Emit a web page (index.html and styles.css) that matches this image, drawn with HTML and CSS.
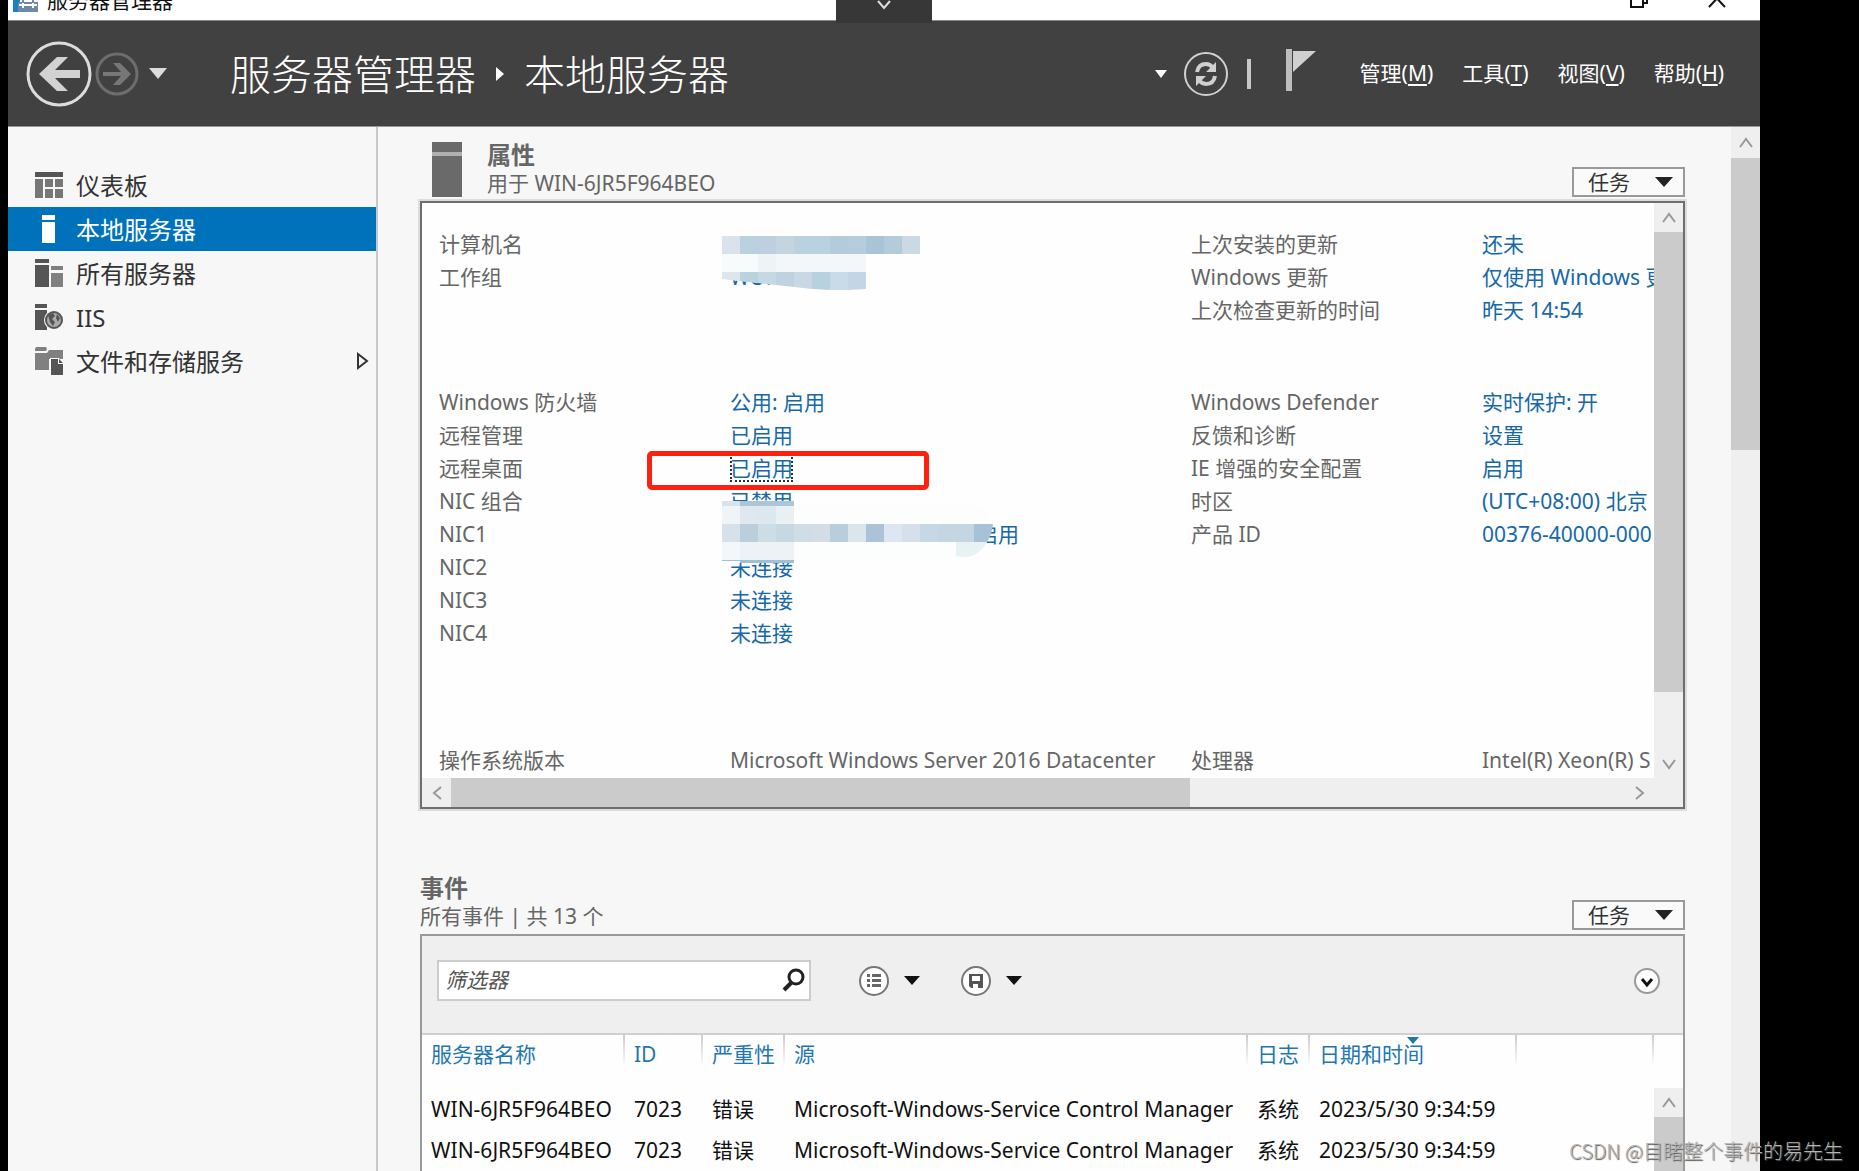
FILE: index.html
```html
<!DOCTYPE html>
<html lang="zh-CN">
<head>
<meta charset="utf-8">
<title>服务器管理器</title>
<link rel="stylesheet" href="styles.css">
</head>
<body>
<div class="window">
  <div class="titlebar">
    <svg class="app-icon" width="26" height="22" viewBox="0 0 26 22"><path d="M0 0h7v22H0z" fill="#1c7fc0"/><path d="M7 2h3v8H7z" fill="#7fc4ec"/><path d="M5 12h20v10H5z" fill="#6d8ba4"/><path d="M10 12V6h10v6" fill="none" stroke="#6d8ba4" stroke-width="2"/><path d="M6 15h18M10 13v5M20 13v5" stroke="#fff" stroke-width="2"/></svg>
    <span class="app-name">服务器管理器</span>
    <div class="window-buttons">
      <button type="button" aria-label="最小化"><svg width="18" height="20"><path d="M0 11.500h14" stroke="#ddd"/></svg></button>
      <button type="button" aria-label="还原"><svg width="18" height="20"><path d="M1 6h12v13H1zM5 6V2h12v13h-4" fill="none" stroke="#111" stroke-width="2"/></svg></button>
      <button type="button" aria-label="关闭"><svg width="18" height="20"><path d="M1 2l16 17M17 2L1 19" stroke="#111" stroke-width="2"/></svg></button>
    </div>
  </div>
  <button type="button" class="session-tab" aria-label="展开连接栏"><svg width="16" height="10"><path d="M2 1l6 7 6-7" fill="none" stroke="#ddd" stroke-width="2"/></svg></button>

  <header class="header">
    <button type="button" class="nav-back" aria-label="后退"><svg width="64" height="66" viewBox="0 0 64 66"><circle cx="32" cy="33" r="31" fill="none" stroke="#dcdcdc" stroke-width="3"/><path d="M12 33L30 16h11L28 29h25v8H28l13 13H30z" fill="#d2d2d2"/></svg></button>
    <button type="button" class="nav-forward" aria-label="前进"><svg width="44" height="46" viewBox="0 0 44 46"><circle cx="22" cy="23" r="20" fill="none" stroke="#6d6d6d" stroke-width="3"/><path d="M36 23L25 12h-7l8 9H8v4h18l-8 9h7z" fill="#777"/></svg></button>
    <button type="button" class="nav-menu" aria-label="历史"><svg width="18" height="12"><path d="M0 0h18l-9 11z" fill="#dcdcdc"/></svg></button>
    <h1 class="crumbs"><span>服务器管理器</span><svg width="8" height="14"><path d="M0 0l8 7-8 7z" fill="#fff"/></svg><span>本地服务器</span></h1>
    <div class="header-tools">
      <svg class="tool-caret" width="12" height="8"><path d="M0 0h12l-6 8z" fill="#fff"/></svg>
      <button type="button" aria-label="刷新"><svg width="46" height="46" viewBox="0 0 46 46"><circle cx="23" cy="23" r="21" fill="none" stroke="#d0d0d0" stroke-width="2"/><g fill="none" stroke="#d0d0d0" stroke-width="4"><path d="M14 21c1-6 5-8 9-8 3 0 5 1 7 4"/><path d="M32 25c-1 6-5 8-9 8-3 0-5-1-7-4"/></g><path d="M33 11v10H23zM13 35V25h10z" fill="#d0d0d0"/></svg></button>
      <svg class="tool-bar" width="4" height="32"><path d="M2 1v30" stroke="#c8c8c8" stroke-width="4"/></svg>
      <button type="button" class="flag" aria-label="通知"><svg width="30" height="42"><path d="M0 0h6v42H0z" fill="#bdbdbd"/><path d="M7 2h23L7 23z" fill="#d0d0d0"/></svg></button>
      <nav class="menus">
        <button type="button">管理(<u>M</u>)</button>
        <button type="button">工具(<u>T</u>)</button>
        <button type="button">视图(<u>V</u>)</button>
        <button type="button">帮助(<u>H</u>)</button>
      </nav>
    </div>
  </header>

  <div class="body">
    <nav class="sidebar">
      <a href="#dashboard"><svg width="28" height="28"><path d="M0 1h28v5H0z" fill="#555"/><path d="M0 8h8v19H0zM10 8h8v8h-8zM20 8h8v8h-8zM10 18h8v9h-8zM20 18h8v9h-8z" fill="#777"/></svg><span>仪表板</span></a>
      <a href="#local" class="current" aria-current="page"><svg width="28" height="28"><path d="M7 0h13v5H7zM7 7h13v21H7z" fill="#fff"/></svg><span>本地服务器</span></a>
      <a href="#all"><svg width="28" height="28"><path d="M0 0h14v4H0zM0 6h14v22H0z" fill="#555"/><path d="M16 7h12v4H16zM16 14h12v14H16z" fill="#808080"/></svg><span>所有服务器</span></a>
      <a href="#iis"><svg width="28" height="28"><path d="M0 1h12v4H0zM0 7h12v20H0z" fill="#555"/><circle cx="19" cy="17" r="10" fill="#f7f7f7"/><circle cx="19" cy="17" r="8" fill="#aaa" stroke="#555" stroke-width="2"/><path d="M13 12l5-2 2 3-3 3 3 3-2 4-3-4zM22 11l3 4-2 4-2-4z" fill="#555"/></svg><span>IIS</span></a>
      <a href="#storage"><svg width="28" height="28"><path d="M1 0h10l1 2-1 2H0V2zM0 6h12l2-3h14v9H14v11H0z" fill="#808080"/><path d="M15 11h9l4 5v12H15z" fill="#f7f7f7"/><path d="M16 12h7v5h5v11H16zM24 12l4 4h-4z" fill="#555"/></svg><span>文件和存储服务</span><svg class="expander" width="12" height="16"><path d="M1 1l9 7-9 7z" fill="none" stroke="#333" stroke-width="2"/></svg></a>
    </nav>

    <main class="content">
      <section class="panel-group">
        <div class="panel-head">
          <svg class="server-icon" width="30" height="55"><path d="M0 0h30v10H0zM0 14h30v41H0z" fill="#6a6a6a"/><path d="M0 10h30v4H0z" fill="#b0b0b0"/></svg>
          <div><h2>属性</h2><p>用于 WIN-6JR5F964BEO</p></div>
          <button type="button" class="tasks">任务<svg width="18" height="10"><path d="M0 0h18l-9 10z" fill="#222"/></svg></button>
        </div>
        <div class="panel properties">
          <div class="prop-area">
            <div class="prop-group first">
              <dl><dt>计算机名</dt><dd></dd><dt>工作组</dt><dd><a href="#workgroup">WORKGROUP</a></dd></dl>
              <dl><dt>上次安装的更新</dt><dd><a href="#u1">还未</a></dd><dt>Windows 更新</dt><dd><a href="#u2">仅使用 Windows 更</a></dd><dt>上次检查更新的时间</dt><dd><a href="#u3">昨天 14:54</a></dd></dl>
            </div>
            <div class="prop-group second">
              <dl><dt>Windows 防火墙</dt><dd><a href="#fw">公用: 启用</a></dd><dt>远程管理</dt><dd><a href="#rm">已启用</a></dd><dt>远程桌面</dt><dd><a href="#rd" class="focused">已启用</a></dd><dt>NIC 组合</dt><dd><a href="#team">已禁用</a></dd><dt>NIC1</dt><dd><a href="#nic1" class="masked">启用</a></dd><dt>NIC2</dt><dd><a href="#nic2">未连接</a></dd><dt>NIC3</dt><dd><a href="#nic3">未连接</a></dd><dt>NIC4</dt><dd><a href="#nic4">未连接</a></dd></dl>
              <dl><dt>Windows Defender</dt><dd><a href="#wd">实时保护: 开</a></dd><dt>反馈和诊断</dt><dd><a href="#fb">设置</a></dd><dt>IE 增强的安全配置</dt><dd><a href="#ie">启用</a></dd><dt>时区</dt><dd><a href="#tz">(UTC+08:00) 北京</a></dd><dt>产品 ID</dt><dd><a href="#pid">00376-40000-000</a></dd></dl>
            </div>
            <div class="prop-group">
              <dl><dt>操作系统版本</dt><dd>Microsoft Windows Server 2016 Datacenter</dd></dl>
              <dl><dt>处理器</dt><dd>Intel(R) Xeon(R) S</dd></dl>
            </div>
            <svg class="mosaic mosaic-name" width="200" height="56" aria-hidden="true">
              <path d="M0 18h200v36H100L0 43z" fill="#fefefe"/>
              <path d="M0 0h18v18H0z" fill="#dae3eb"/><path d="M18 0h18v18H18z" fill="#bad1df"/><path d="M36 0h18v18H36z" fill="#becfdf"/><path d="M54 0h18v18H54z" fill="#c5d5e0"/><path d="M72 0h36v18H72z" fill="#bad1df"/><path d="M108 0h18v18h-18z" fill="#b3cbdb"/><path d="M126 0h18v18h-18z" fill="#b7cddd"/><path d="M144 0h18v18h-18z" fill="#a9c4d7"/><path d="M162 0h18v18h-18z" fill="#b3cbdb"/><path d="M180 0h18v18h-18z" fill="#cad9e3"/>
              <path d="M0 18h36v18H0z" fill="#f8fbfb"/><path d="M36 18h18v18H36z" fill="#eef3f6"/><path d="M54 18h90v18H54z" fill="#f3f7f9"/>
              <path d="M0 36h18v9L0 43z" fill="#dce6ec"/><path d="M18 36h18v11l-18-2z" fill="#b9d2df"/><path d="M36 36h18v13l-18-2z" fill="#c5d9e4"/><path d="M54 36h18v15l-18-2z" fill="#bfd2e2"/><path d="M72 36h18v17l-18-2z" fill="#c8d9e5"/><path d="M90 36h18v18l-18-1z" fill="#b7d1e0"/><path d="M108 36h18v18h-18z" fill="#c9dae8"/><path d="M126 36h18v17l-18 1z" fill="#c3d5e7"/>
            </svg>
            <svg class="mosaic mosaic-nic" width="272" height="62" aria-hidden="true">
              <path d="M0 0h72v5h180q18 4 18 18l-6 20q-10 14-26 14L72 60v2H0z" fill="#fcfdfd"/>
              <path d="M0 0h18v5H0z" fill="#d9e3ea"/><path d="M18 0h54v5H18z" fill="#adc6d6"/>
              <path d="M0 5h18v18H0z" fill="#eff4f8"/><path d="M18 5h18v18H18z" fill="#dfe8ef"/><path d="M36 5h18v18H36z" fill="#dbe9ef"/><path d="M54 5h18v18H54z" fill="#e8f0f3"/>
              <path d="M0 41h18v18H0z" fill="#f3f7f9"/><path d="M18 41h54v18H18z" fill="#edf2f7"/><path d="M0 59h18v1H0zM18 59h54v3H18z" fill="#9fc0d3"/>
              <path d="M0 23h18v18H0z" fill="#d6e1ea"/><path d="M18 23h18v18H18z" fill="#bacfdb"/><path d="M36 23h18v18H36z" fill="#ccdde6"/><path d="M54 23h18v18H54z" fill="#c6d9e2"/><path d="M72 23h18v18H72z" fill="#cfdee6"/><path d="M90 23h18v18H90z" fill="#d4dde5"/><path d="M108 23h18v18h-18z" fill="#b9cedb"/><path d="M126 23h18v18h-18z" fill="#dae6eb"/><path d="M144 23h18v18h-18z" fill="#abc2d9"/><path d="M162 23h18v18h-18z" fill="#dee7f1"/><path d="M180 23h18v18h-18z" fill="#d8dfec"/><path d="M198 23h18v18h-18z" fill="#c5d8e5"/><path d="M216 23h36v18h-36z" fill="#c3d6e1"/><path d="M252 23h19q-1 10-6 18h-13z" fill="#a7c2d7"/>
              <path d="M234 41h31q-8 14-22 15l-9-1z" fill="#e8f1f3"/>
            </svg>
            <div class="callout"></div>
          </div>
          <div class="scroll-v"><button type="button" aria-label="向上"><svg width="14" height="10"><path d="M1 9l6-8 6 8" fill="none" stroke="#999" stroke-width="2"/></svg></button><div class="thumb"></div><button type="button" class="end" aria-label="向下"><svg width="14" height="10"><path d="M1 1l6 8 6-8" fill="none" stroke="#999" stroke-width="2"/></svg></button></div>
          <div class="scroll-h"><button type="button" aria-label="向左"><svg width="10" height="14"><path d="M9 1L2 7l7 6" fill="none" stroke="#999" stroke-width="2"/></svg></button><div class="thumb"></div><button type="button" class="end" aria-label="向右"><svg width="10" height="14"><path d="M1 1l7 6-7 6" fill="none" stroke="#999" stroke-width="2"/></svg></button></div>
          <div class="scroll-corner"></div>
        </div>
      </section>

      <section class="panel-group grow">
        <div class="panel-head">
          <div><h2>事件</h2><p>所有事件 | 共 13 个</p></div>
          <button type="button" class="tasks">任务<svg width="18" height="10"><path d="M0 0h18l-9 10z" fill="#222"/></svg></button>
        </div>
        <div class="panel events">
          <div class="toolbar">
            <label class="filter"><input type="text" placeholder="筛选器" aria-label="筛选器"><svg width="22" height="26" viewBox="0 0 22 26"><circle cx="13" cy="9" r="7" fill="none" stroke="#222" stroke-width="3"/><path d="M8 15l-7 7" stroke="#222" stroke-width="4"/></svg></label>
            <button type="button" class="round" aria-label="分组"><svg width="32" height="32"><circle cx="16" cy="16" r="14" fill="#fff" stroke="#777" stroke-width="2"/><path d="M9 9h3v3H9zM14 9h9v3h-9zM9 14h3v3H9zM14 14h9v3h-9zM9 19h3v3H9zM14 19h9v3h-9z" fill="#666"/></svg><svg width="16" height="9"><path d="M0 0h16l-8 9z" fill="#111"/></svg></button>
            <button type="button" class="round" aria-label="保存"><svg width="32" height="32"><circle cx="16" cy="16" r="14" fill="#fff" stroke="#777" stroke-width="2"/><path d="M9 9h14v14H11l-2-2zM12 11v5h8v-5zM13 19v4h5v-4z" fill="#555" fill-rule="evenodd"/></svg><svg width="16" height="9"><path d="M0 0h16l-8 9z" fill="#111"/></svg></button>
            <button type="button" class="expand" aria-label="展开"><svg width="28" height="28"><circle cx="14" cy="14" r="12" fill="#fff" stroke="#999" stroke-width="2"/><path d="M9 12l5 6 5-6" fill="none" stroke="#111" stroke-width="3"/></svg></button>
          </div>
          <div class="grid-area">
            <table>
              <colgroup><col class="c-server"><col class="c-id"><col class="c-level"><col class="c-source"><col class="c-log"><col class="c-date"><col></colgroup>
              <thead><tr><th>服务器名称</th><th>ID</th><th>严重性</th><th>源</th><th>日志</th><th class="sorted">日期和时间<svg width="12" height="7"><path d="M0 0h12l-6 7z" fill="#1f77b0"/></svg></th><th></th></tr></thead>
              <tbody>
                <tr><td>WIN-6JR5F964BEO</td><td>7023</td><td>错误</td><td>Microsoft-Windows-Service Control Manager</td><td>系统</td><td>2023/5/30 9:34:59</td><td></td></tr>
                <tr><td>WIN-6JR5F964BEO</td><td>7023</td><td>错误</td><td>Microsoft-Windows-Service Control Manager</td><td>系统</td><td>2023/5/30 9:34:59</td><td></td></tr>
              </tbody>
            </table>
            <div class="scroll-v"><button type="button" aria-label="向上"><svg width="14" height="10"><path d="M1 9l6-8 6 8" fill="none" stroke="#999" stroke-width="2"/></svg></button><div class="thumb"></div></div>
          </div>
        </div>
      </section>
    </main>
    <div class="scroll-v page-scroll"><button type="button" aria-label="向上"><svg width="14" height="10"><path d="M1 9l6-8 6 8" fill="none" stroke="#999" stroke-width="2"/></svg></button><div class="thumb"></div></div>
  </div>
</div>
<div class="watermark">CSDN @目睹整个事件的易先生</div>
</body>
</html>
```

FILE: styles.css
```css
* { box-sizing: border-box; }
body {
  margin: 0;
  background: #000;
  color: #666;
  font: 21px/33px "Noto Sans", "Noto Sans CJK SC", sans-serif;
}
h1, h2, p, dl, dd { margin: 0; font-weight: 400; }
svg { display: block; flex: none; overflow: visible; }
a { color: #1668a8; text-decoration: none; }
button { padding: 0; border: 0; background: none; color: inherit; font: inherit; }

.window {
  position: relative;
  display: flex;
  flex-direction: column;
  height: 100vh;
  margin: 0 99px 0 8px;
  overflow: hidden;
  background: #f7f7f7;
}

/* title bar, scrolled partly out of view */
.titlebar {
  display: flex;
  flex: none;
  align-items: flex-end;
  height: 21px;
  padding-left: 5px;
  overflow: hidden;
  background: #fff;
  border-bottom: 1px solid #888;
}
.app-icon { margin-bottom: 8px; }
.app-name { margin-left: 8px; color: #111; line-height: 40px; }
.window-buttons { display: flex; gap: 60px; margin: 0 34px 12px auto; }
.session-tab {
  position: absolute;
  top: 0;
  left: 50%;
  display: flex;
  justify-content: center;
  width: 96px;
  height: 23px;
  margin-left: -48px;
  background: #373737;
}

.header {
  display: flex;
  flex: none;
  align-items: center;
  height: 106px;
  padding: 0 36px 0 19px;
  background: #424141;
  border-bottom: 1px solid #999;
  color: #fff;
}
.nav-forward { margin-left: 4px; }
.nav-menu { margin-left: 10px; }
.crumbs {
  display: flex;
  align-items: center;
  gap: 20px;
  margin-left: 63px;
  font-size: 41px;
  font-weight: 300;
  line-height: 60px;
  white-space: nowrap;
}
.header-tools { display: flex; align-items: center; margin-left: auto; }
.tool-caret { margin-right: 16px; }
.tool-bar { margin: 0 35px 0 18px; }
.flag { margin: 0 44px 8px 0; }
.menus { display: flex; gap: 29px; white-space: nowrap; }
.menus u { text-underline-offset: 3px; }

.body { display: flex; flex: 1; min-height: 0; }
.sidebar {
  display: flex;
  flex: none;
  flex-direction: column;
  width: 370px;
  padding-top: 36px;
  border-right: 2px solid #c8c8c8;
}
.sidebar a {
  display: flex;
  align-items: center;
  gap: 13px;
  height: 44px;
  padding: 0 7px 0 27px;
  color: #333;
  font-size: 24px;
}
.sidebar a.current { background: #0072bc; color: #fff; }
.sidebar .expander { margin-left: auto; }

.content {
  display: flex;
  flex: 1;
  flex-direction: column;
  min-width: 0;
  padding: 0 46px 0 42px;
}
.panel-group { flex: none; }
.panel-group.grow { display: flex; flex: 1; flex-direction: column; min-height: 0; margin-top: 51px; }
.panel-head { display: flex; flex: none; align-items: flex-end; height: 74px; padding-bottom: 4px; }
.panel-head h2 { font-size: 24px; font-weight: 700; line-height: 28px; }
.panel-head p { line-height: 28px; }
.server-icon { margin: 0 25px 0 12px; }
.tasks {
  display: flex;
  align-items: center;
  justify-content: space-between;
  width: 113px;
  height: 30px;
  margin-left: auto;
  padding: 0 10px 0 14px;
  background: #fafafa;
  border: 2px solid #999;
  color: #333;
}

.panel { border: 2px solid #6e6e6e; background: #fefefe; }
.properties {
  display: grid;
  grid-template-columns: minmax(0, 1fr) 29px;
  grid-template-rows: auto 29px;
  box-shadow: 0 0 0 2px #dcdcdc;
}
.prop-area { position: relative; padding: 25px 0 1px 17px; overflow: hidden; white-space: nowrap; }
.prop-group { display: flex; }
.prop-group.first { margin-bottom: 59px; }
.prop-group.second { margin-bottom: 94px; }
.prop-group dl {
  display: grid;
  flex: none;
  grid-template-columns: 291px 461px;
  grid-auto-rows: 33px;
  align-content: start;
}
.focused { outline: 2px dotted #234; outline-offset: -2px; }
.masked { margin-left: 247px; }
.mosaic { position: absolute; left: 300px; }
.mosaic-name { top: 33px; }
.mosaic-nic { top: 298px; }
.callout {
  position: absolute;
  top: 248px;
  left: 225px;
  width: 282px;
  height: 39px;
  border: 5px solid #ff2010;
  border-radius: 5px;
}

.scroll-v, .scroll-h { display: flex; background: #efefef; }
.scroll-v { flex-direction: column; }
.scroll-v button, .scroll-h button { display: flex; flex: none; align-items: center; justify-content: center; }
.scroll-v button { height: 29px; }
.scroll-h button { width: 29px; }
.thumb { background: #cbcbcb; }
.scroll-v .thumb { flex: 0 0 80%; }
.scroll-h .thumb { flex: 0 0 60%; }
.end { margin-top: auto; }
.scroll-h .end { margin: 0 0 0 auto; }
.scroll-corner { background: #efefef; }
.page-scroll { flex: none; width: 29px; }
.page-scroll button { height: 31px; }
.page-scroll .thumb { flex-basis: 28%; }

.events { display: flex; flex: 1; flex-direction: column; min-height: 0; border-color: #999; border-bottom: 0; overflow: hidden; }
.toolbar {
  display: flex;
  flex: none;
  align-items: center;
  height: 99px;
  padding: 0 22px 8px 15px;
  background: #efefef;
  border-bottom: 2px solid #d0d0d0;
}
.filter {
  display: flex;
  align-items: center;
  width: 374px;
  height: 41px;
  margin-right: 47px;
  padding: 0 4px 0 6px;
  background: #fff;
  border: 2px solid #ccc;
}
.filter input { flex: 1; min-width: 0; padding: 0; border: 0; outline: 0; background: none; font: inherit; font-style: italic; }
.filter input::placeholder { color: #555; opacity: 1; }
.round { display: flex; align-items: center; gap: 14px; margin-right: 40px; }
.expand { margin-left: auto; }
.grid-area { display: flex; flex: 1; min-height: 0; }
.grid-area .scroll-v { width: 29px; margin-top: 53px; }
.grid-area .thumb { flex: 1; }

table { flex: 1; width: 0; height: 0; table-layout: fixed; border-collapse: collapse; white-space: nowrap; }
.c-server { width: 203px; }
.c-id { width: 78px; }
.c-level { width: 82px; }
.c-source { width: 463px; }
.c-log { width: 62px; }
.c-date { width: 207px; }
th, td { padding: 0 0 0 9px; text-align: left; font-weight: 400; }
th {
  position: relative;
  height: 54px;
  color: #1f77b0;
  line-height: 39px;
  vertical-align: top;
  background: linear-gradient(#ccc, #fefefe) right top / 2px 32px no-repeat;
}
td { height: 41px; color: #111; }
.sorted svg { position: absolute; top: 2px; left: 97px; }

.watermark {
  position: absolute;
  right: 16px;
  bottom: 5px;
  color: #b4b4b4;
  font: 20px/30px "Noto Sans CJK SC", sans-serif;
  font-weight: 300;
  text-shadow: 1px 1px 1px #555;
}
```
